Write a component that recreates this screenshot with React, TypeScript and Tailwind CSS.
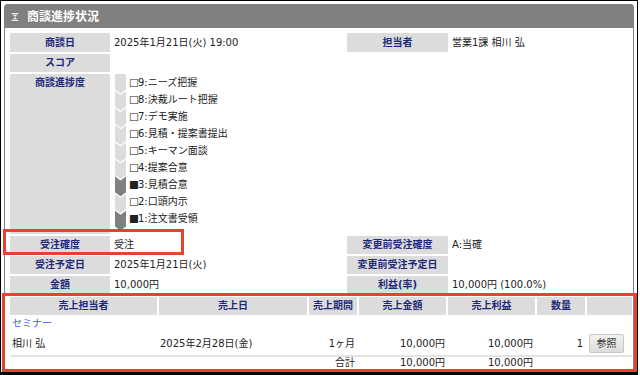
import React from "react";

const steps = [
  { t: "9:ニーズ把握", on: false },
  { t: "8:決裁ルート把握", on: false },
  { t: "7:デモ実施", on: false },
  { t: "6:見積・提案書提出", on: false },
  { t: "5:キーマン面談", on: false },
  { t: "4:提案合意", on: false },
  { t: "3:見積合意", on: true },
  { t: "2:口頭内示", on: false },
  { t: "1:注文書受領", on: true },
];

const P = 17.1;
const W = 11;
const D = 4;
const G = 1.5;

function Chevrons() {
  const h = steps.length * P + D;
  return (
    <svg width={W} height={h} className="shrink-0">
      {steps.map((s, i) => {
        const y0 = i * P;
        const top = i === 0 ? `0,0 ${W},0` : `0,${y0} ${W / 2},${y0 + D} ${W},${y0}`;
        const pts = `${top} ${W},${y0 + P - G} ${W / 2},${y0 + P - G + D} 0,${y0 + P - G}`;
        return <polygon key={i} points={pts} fill={s.on ? "#808080" : "#dcdcdc"} />;
      })}
    </svg>
  );
}

function Label({ children, h = "h-[18px] leading-[18px]" }: { children?: React.ReactNode; h?: string }) {
  return <div className={`bg-[#dcdcdc] text-[#1e2a78] font-bold text-center ${h}`}>{children}</div>;
}

function Val({ children, h = "h-[18px] leading-[18px]" }: { children?: React.ReactNode; h?: string }) {
  return <div className={`pl-[2px] text-[#222] ${h}`}>{children}</div>;
}

export default function App() {
  return (
    <div className="relative w-[638px] h-[375px] bg-white border border-black border-b-[3px] pt-[3px] pl-[3px] overflow-hidden font-['DejaVu_Sans','Noto_Sans_CJK_JP',sans-serif] text-[10px]">
      <div className="w-[630px] h-[380px] border border-[#808080] rounded-t-[3px]">
        <div className="h-[23px] bg-[#808080] flex items-center pl-[6px] gap-[8px] text-white font-bold text-[11.5px]">
          <svg width="8" height="8" viewBox="0 0 8 8">
            <path d="M0.5 0.5H7.5M0.5 7.5H7.5" stroke="#e6e6e6" strokeWidth="1" />
            <path d="M1.5 1.5H6.5L4 4ZM1.5 6.5H6.5L4 4Z" fill="#e6e6e6" />
          </svg>
          <span className="text-[12px]">商談進捗状況</span>
        </div>

        <div className="pl-[5px] pt-[5px]">
          <div className="grid grid-cols-[100px_233px_101px_182px] gap-[2px]">
            <Label h="h-[19px] leading-[19px]">商談日</Label>
            <Val h="h-[19px] leading-[19px]">2025年1月21日(火) 19:00</Val>
            <Label h="h-[19px] leading-[19px]">担当者</Label>
            <Val h="h-[19px] leading-[19px]">営業1課 相川 弘</Val>

            <Label>スコア</Label>
            <Val />
            <div />
            <div />

            <div className="bg-[#dcdcdc] text-[#1e2a78] font-bold text-center leading-[16px] pt-[1px]">商談進捗度</div>
            <div className="flex pl-[3px] pb-[2px]">
              <Chevrons />
              <div className="flex flex-col pl-[3px] text-[#222]">
                {steps.map((s) => (
                  <div key={s.t} className="h-[17.1px] leading-[14px] flex items-center">
                    <span className="font-['DejaVu_Sans'] text-[10.5px] w-[8px] mr-[1px] leading-[14px] -translate-y-[1px]">
                      {s.on ? "■" : "□"}
                    </span>
                    <span>{s.t}</span>
                  </div>
                ))}
              </div>
            </div>
            <div />
            <div />

            <Label>受注確度</Label>
            <Val>受注</Val>
            <Label>変更前受注確度</Label>
            <Val>A:当確</Val>

            <Label>受注予定日</Label>
            <Val>2025年1月21日(火)</Val>
            <Label>変更前受注予定日</Label>
            <Val />

            <Label>金額</Label>
            <Val>10,000円</Val>
            <Label>利益(率)</Label>
            <Val>10,000円 (100.0%)</Val>
          </div>

          <div className="mt-[3px] grid grid-cols-[147px_148px_48px_87px_87px_48px_45px] gap-x-[2px] text-[#222]">
            <Label>売上担当者</Label>
            <Label>売上日</Label>
            <Label>売上期間</Label>
            <Label>売上金額</Label>
            <Label>売上利益</Label>
            <Label>数量</Label>
            <Label />

            <div className="col-span-7 h-[18px] leading-[18px] pl-[2px] text-[#3f5fe0]">セミナー</div>

            <div className="h-[21px] leading-[21px] pl-[2px]">相川 弘</div>
            <div className="h-[21px] leading-[21px] pl-[1px]">2025年2月28日(金)</div>
            <div className="h-[21px] leading-[21px] text-right pr-[2px]">1ヶ月</div>
            <div className="h-[21px] leading-[21px] text-right pr-[1px]">10,000円</div>
            <div className="h-[21px] leading-[21px] text-right pr-[2px]">10,000円</div>
            <div className="h-[21px] leading-[21px] text-right pr-[2px]">1</div>
            <div className="h-[21px] flex items-center pl-[2px]">
              <button className="w-[35px] h-[19px] rounded-[2px] border border-[#c8c8c8] bg-gradient-to-b from-[#f2f2f2] to-[#dcdcdc] text-[#333] text-[10px] leading-[17px]">
                参照
              </button>
            </div>

            <div className="col-span-7 h-[2px] bg-[#e2e2e2] mt-[1px]" />

            <div />
            <div />
            <div className="h-[14px] leading-[12px] text-right pr-[2px]">合計</div>
            <div className="h-[14px] leading-[12px] text-right pr-[1px]">10,000円</div>
            <div className="h-[14px] leading-[12px] text-right pr-[2px]">10,000円</div>
            <div />
            <div />
          </div>
        </div>
      </div>

      <div className="absolute left-[2px] top-[228px] w-[181px] h-[26px] border-[3px] border-[#e5432d]" />
      <div className="absolute left-[1px] top-[292px] w-[635px] h-[79px] border-[3px] border-[#e5432d]" />
    </div>
  );
}
